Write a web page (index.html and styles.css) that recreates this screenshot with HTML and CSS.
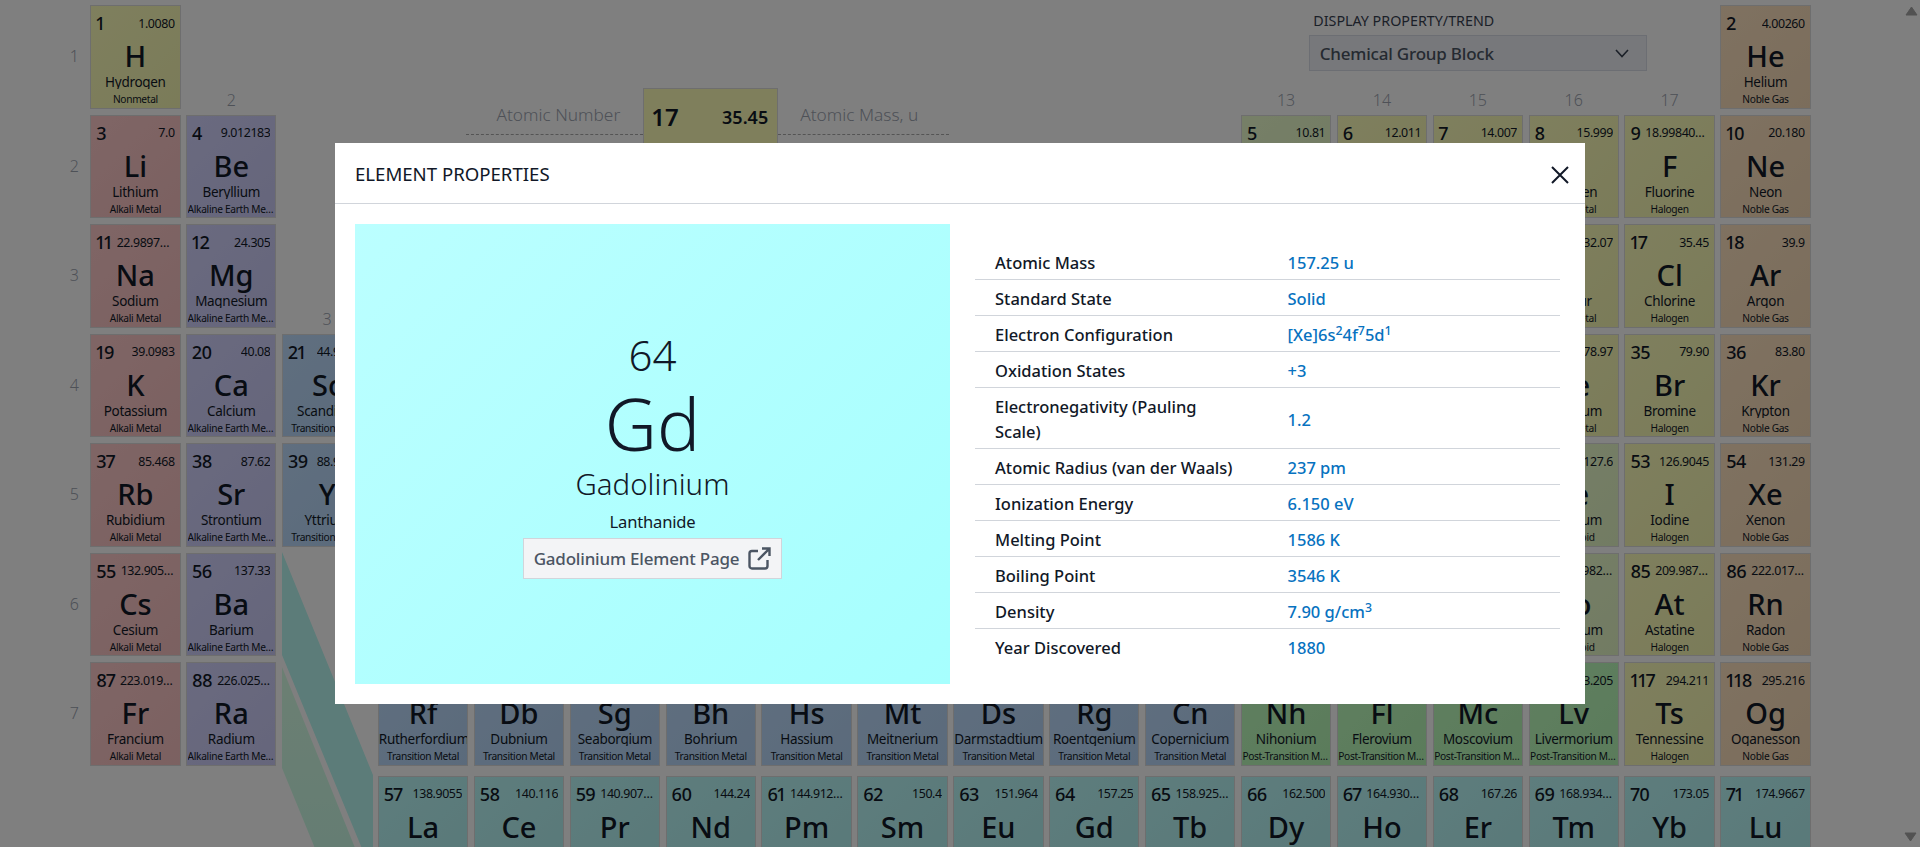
FILE: index.html
```html
<!DOCTYPE html>
<html lang="en">
<head>
  <meta charset="UTF-8">
  <title>Periodic Table of Elements</title>
  <link rel="stylesheet" href="styles.css">
</head>
<body>
  <main id="ptable" class="ptable">
    <!-- legend and property picker sit in the empty top of the table -->
    <div class="legend">
      <div class="legend-side legend-left">Atomic Number</div>
      <div class="legend-cell cat-halogen">
        <div class="legend-top"><span>17</span><span>35.45</span></div>
        <div class="legend-symbol">Cl</div>
        <div class="legend-name">Chlorine</div>
      </div>
      <div class="legend-side legend-right">Atomic Mass, u</div>
    </div>
    <div class="picker">
      <label class="picker-label">DISPLAY PROPERTY/TREND</label>
      <div class="picker-box">
        <span>Chemical Group Block</span>
        <svg class="chevron" viewBox="0 0 14 9" width="14" height="9"><path d="M1 1l6 6.5L13 1" fill="none" stroke="#374151" stroke-width="1.6"/></svg>
      </div>
    </div>
  </main>

  <svg class="connectors" width="1920" height="847" viewBox="0 0 1920 847">
    <defs>
      <linearGradient id="band2" x1="0" y1="0" x2="0" y2="1">
        <stop offset="0" stop-color="#d8ffe6"/>
        <stop offset="1" stop-color="#c8fae6"/>
      </linearGradient>
    </defs>
    <polygon points="282,552 373,775 373,880 375,880 282,655" fill="#b8f8f2"/>
    <polygon points="282,667 368,880 328,880 282,768" fill="url(#band2)"/>
  </svg>

  <div class="overlay">
    <section class="modal">
      <header class="modal-header">
        <h2>ELEMENT PROPERTIES</h2>
        <button class="close" aria-label="Close">
          <svg viewBox="0 0 18 18" width="18" height="18"><path d="M1 1l16 16M17 1L1 17" fill="none" stroke="#111827" stroke-width="2"/></svg>
        </button>
      </header>
      <div class="modal-body">
        <div class="element-card">
          <div class="card-number">64</div>
          <div class="card-symbol">Gd</div>
          <div class="card-name">Gadolinium</div>
          <div class="card-group">Lanthanide</div>
          <a class="card-link" href="#">
            Gadolinium Element Page
            <svg viewBox="0 0 23 23" width="23" height="23"><path d="M10 4H4a2.5 2.5 0 0 0-2.5 2.5V19A2.5 2.5 0 0 0 4 21.5h13a2.5 2.5 0 0 0 2.5-2.5v-6M14 1.5h7.5V9M21.5 1.5L10 13" fill="none" stroke="#4b5563" stroke-width="2.4"/></svg>
          </a>
        </div>
        <div class="props-wrap">
          <table class="props">
            <tr><th>Atomic Mass</th><td>157.25 u</td></tr>
            <tr><th>Standard State</th><td>Solid</td></tr>
            <tr><th>Electron Configuration</th><td>[Xe]6s<sup>2</sup>4f<sup>7</sup>5d<sup>1</sup></td></tr>
            <tr><th>Oxidation States</th><td>+3</td></tr>
            <tr><th>Electronegativity (Pauling Scale)</th><td>1.2</td></tr>
            <tr><th>Atomic Radius (van der Waals)</th><td>237 pm</td></tr>
            <tr><th>Ionization Energy</th><td>6.150 eV</td></tr>
            <tr><th>Melting Point</th><td>1586 K</td></tr>
            <tr><th>Boiling Point</th><td>3546 K</td></tr>
            <tr><th>Density</th><td>7.90 g/cm<sup>3</sup></td></tr>
            <tr><th>Year Discovered</th><td>1880</td></tr>
          </table>
        </div>
      </div>
    </section>

    <svg class="scroll-arrow scroll-up" viewBox="0 0 13 10" width="13" height="10"><path d="M6.5 1L12 9H1z" fill="#525252" stroke="#525252" stroke-linejoin="round"/></svg>
    <svg class="scroll-arrow scroll-down" viewBox="0 0 13 10" width="13" height="10"><path d="M1 1h11L6.5 9z" fill="#525252" stroke="#525252" stroke-linejoin="round"/></svg>
  </div>

  <script src="app.js"></script>
</body>
</html>
```

FILE: styles.css
```css
* { box-sizing: border-box; }
html, body { margin: 0; height: 100%; overflow: hidden; background: #fff; }
body { font-family: "Noto Sans", "Open Sans", sans-serif; color: #111827; }

.ptable {
  display: grid;
  grid-template-columns: 84.7px repeat(18, 90.4px);
  grid-template-rows: repeat(7, 103.5px) 107.5px;
  column-gap: 5.5px;
  row-gap: 6px;
  padding-top: 5px;
}

/* element cell */
.cell {
  display: flex;
  flex-direction: column;
  min-width: 0;
  overflow: hidden;
  border: 1px solid #dcdcdc;
  padding: 5px 5px 0 5px;
  text-align: center;
  background-image: linear-gradient(135deg, rgba(255,255,255,0.06), rgba(0,0,0,0.03));
}
.cell-top { display: flex; justify-content: space-between; align-items: center; gap: 5px; height: 24px; }
.cell-num { font-size: 18px; font-weight: 500; letter-spacing: -0.6px; flex: none; font-variant-numeric: proportional-nums; }
.cell-mass { font-size: 12.4px; letter-spacing: -0.4px; min-width: 0; overflow: hidden; white-space: nowrap; text-overflow: ellipsis; }
.cell-sym { font-size: 29px; font-weight: 500; line-height: 37px; margin-top: 2px; }
.cell-name { font-size: 13.5px; line-height: 16px; height: 15px; overflow: hidden; white-space: nowrap; letter-spacing: -0.3px; margin: 0 -5px; }
.cell-cat { font-size: 10.2px; line-height: 14px; height: 14px; overflow: hidden; white-space: nowrap; text-overflow: ellipsis; letter-spacing: -0.32px; margin: 3px -4.5px 0; }
.row-f { margin-top: 4px; height: 103.5px; }

.cat-alkali { background-color: #ffc8c8; }
.cat-alkaline { background-color: #d2d2ff; }
.cat-transition { background-color: #bcdcff; }
.cat-post { background-color: #bcffbc; }
.cat-metalloid { background-color: #ecffcc; }
.cat-nonmetal { background-color: #feffb8; }
.cat-halogen { background-color: #feffb8; }
.cat-noble { background-color: #ffe2be; }
.cat-lanthanide { background-color: #b8fafa; }

.group-label, .period-label { color: #9ca3af; font-size: 16px; font-weight: 300; line-height: 17px; }
.group-label { align-self: end; text-align: center; }
.period-label { align-self: center; text-align: right; padding-right: 5.7px; grid-column: 1; }

/* legend */
.legend {
  grid-column: 4 / 13;
  grid-row: 1 / 4;
  align-self: start;
  display: flex;
  justify-content: center;
  align-items: flex-start;
  padding-top: 83px;
  padding-right: 6px;
}
.legend-side {
  margin-top: 15px;
  height: 32px;
  line-height: 24px;
  font-size: 17.3px;
  font-weight: 300;
  color: #9ca3af;
  border-bottom: 1px dashed #a8a8a8;
}
.legend-left { width: 177px; text-align: right; padding-right: 23px; }
.legend-right { width: 171px; padding-left: 22px; }
.legend-cell { width: 135px; height: 160px; border: 1px solid #dcdcdc; padding: 14px 9px 0 7px; text-align: center; }
.legend-top { display: flex; justify-content: space-between; font-weight: 600; font-size: 18px; line-height: 28px; }
.legend-top span:first-child { font-size: 24px; }
.legend-symbol { font-size: 44px; font-weight: 500; line-height: 56px; }
.legend-name { font-size: 15px; }

/* property picker */
.picker { grid-column: 14 / 19; grid-row: 1; justify-self: center; width: 338.4px; padding-top: 6px; }
.picker-label { display: block; font-size: 14.3px; line-height: 20px; padding-left: 4.6px; color: #374151; margin-bottom: 4px; }
.picker-box {
  display: flex;
  justify-content: space-between;
  align-items: center;
  height: 36.4px;
  padding: 0 17px 0 10px;
  border: 1px solid #d8dce6;
  background: #eef1f6;
  color: #4b5563;
  font-size: 17px;
  font-weight: 500;
  letter-spacing: -0.2px;
}

.connectors { position: absolute; left: 0; top: 0; pointer-events: none; }

/* modal */
.overlay {
  position: fixed;
  inset: 0;
  background: rgba(0,0,0,0.5);
  display: flex;
  align-items: center;
  justify-content: center;
}
.modal { width: 1250px; height: 561px; background: #fff; display: flex; flex-direction: column; }
.modal-header {
  height: 61px;
  flex: none;
  display: flex;
  align-items: center;
  justify-content: space-between;
  padding: 0 16px 0 20px;
  border-bottom: 1px solid #d1d5db;
}
.modal-header h2 { margin: 0; font-size: 18.6px; font-weight: 400; color: #111827; }
.close { display: flex; border: 0; padding: 0; margin-top: 3px; background: none; }
.modal-body { flex: 1; display: flex; padding: 20px; min-height: 0; }

.element-card {
  width: 595px;
  flex: none;
  display: flex;
  flex-direction: column;
  align-items: center;
  justify-content: center;
  background: linear-gradient(135deg, #bbffff, #a6fffe);
  text-align: center;
}
.card-number { font-size: 42px; font-weight: 300; line-height: 52px; }
.card-symbol { font-size: 72px; font-weight: 300; line-height: 84px; }
.card-name { font-size: 29.4px; font-weight: 300; line-height: 38px; }
.card-group { font-size: 16.6px; line-height: 24px; margin-top: 7px; letter-spacing: -0.2px; }
.card-link {
  display: flex;
  align-items: center;
  gap: 9px;
  height: 41.4px;
  margin-top: 4px;
  padding: 0 10px;
  border: 1px solid #d1d5db;
  background: #f3f4f6;
  color: #4b5563;
  font-size: 17px;
  font-weight: 500;
  text-decoration: none;
  letter-spacing: -0.2px;
}

.props-wrap { flex: 1; display: flex; align-items: center; padding-left: 25px; padding-right: 5px; }
.props { width: 100%; table-layout: fixed; border-collapse: collapse; font-size: 16.5px; line-height: 25px; }
.props tr { border-bottom: 1px solid #d1d5db; }
.props tr:last-child { border-bottom: 0; }
.props th, .props td { padding: 6px 20px 4px; vertical-align: middle; text-align: left; font-weight: 500; }
.props th { color: #111827; padding-right: 28px; }
.props td { color: #0772c0; }
.props sup { font-size: 75%; line-height: 0; vertical-align: baseline; position: relative; top: -0.5em; }

.scroll-arrow { position: absolute; }
.scroll-up { left: 1905px; top: 6px; }
.scroll-down { left: 1904px; top: 832px; }
```

FILE: app.js
```js
// num, symbol, name, mass, category, column, row
const elements = `1 H Hydrogen 1.0080 nonmetal 1 1
2 He Helium 4.00260 noble 18 1
3 Li Lithium 7.0 alkali 1 2
4 Be Beryllium 9.012183 alkaline 2 2
5 B Boron 10.81 metalloid 13 2
6 C Carbon 12.011 nonmetal 14 2
7 N Nitrogen 14.007 nonmetal 15 2
8 O Oxygen 15.999 nonmetal 16 2
9 F Fluorine 18.99840316 halogen 17 2
10 Ne Neon 20.180 noble 18 2
11 Na Sodium 22.9897693 alkali 1 3
12 Mg Magnesium 24.305 alkaline 2 3
13 Al Aluminum 26.981538 post 13 3
14 Si Silicon 28.085 metalloid 14 3
15 P Phosphorus 30.97376200 nonmetal 15 3
16 S Sulfur 32.07 nonmetal 16 3
17 Cl Chlorine 35.45 halogen 17 3
18 Ar Argon 39.9 noble 18 3
19 K Potassium 39.0983 alkali 1 4
20 Ca Calcium 40.08 alkaline 2 4
21 Sc Scandium 44.95591 transition 3 4
22 Ti Titanium 47.867 transition 4 4
23 V Vanadium 50.9415 transition 5 4
24 Cr Chromium 51.996 transition 6 4
25 Mn Manganese 54.93804 transition 7 4
26 Fe Iron 55.84 transition 8 4
27 Co Cobalt 58.93319 transition 9 4
28 Ni Nickel 58.693 transition 10 4
29 Cu Copper 63.55 transition 11 4
30 Zn Zinc 65.4 transition 12 4
31 Ga Gallium 69.723 post 13 4
32 Ge Germanium 72.63 metalloid 14 4
33 As Arsenic 74.92159 metalloid 15 4
34 Se Selenium 78.97 nonmetal 16 4
35 Br Bromine 79.90 halogen 17 4
36 Kr Krypton 83.80 noble 18 4
37 Rb Rubidium 85.468 alkali 1 5
38 Sr Strontium 87.62 alkaline 2 5
39 Y Yttrium 88.90584 transition 3 5
40 Zr Zirconium 91.22 transition 4 5
41 Nb Niobium 92.90637 transition 5 5
42 Mo Molybdenum 95.95 transition 6 5
43 Tc Technetium 96.90636 transition 7 5
44 Ru Ruthenium 101.1 transition 8 5
45 Rh Rhodium 102.9055 transition 9 5
46 Pd Palladium 106.42 transition 10 5
47 Ag Silver 107.868 transition 11 5
48 Cd Cadmium 112.41 transition 12 5
49 In Indium 114.818 post 13 5
50 Sn Tin 118.71 post 14 5
51 Sb Antimony 121.760 metalloid 15 5
52 Te Tellurium 127.6 metalloid 16 5
53 I Iodine 126.9045 halogen 17 5
54 Xe Xenon 131.29 noble 18 5
55 Cs Cesium 132.9054520 alkali 1 6
56 Ba Barium 137.33 alkaline 2 6
72 Hf Hafnium 178.49 transition 4 6
73 Ta Tantalum 180.9479 transition 5 6
74 W Tungsten 183.84 transition 6 6
75 Re Rhenium 186.207 transition 7 6
76 Os Osmium 190.2 transition 8 6
77 Ir Iridium 192.22 transition 9 6
78 Pt Platinum 195.08 transition 10 6
79 Au Gold 196.96657 transition 11 6
80 Hg Mercury 200.59 transition 12 6
81 Tl Thallium 204.383 post 13 6
82 Pb Lead 207 post 14 6
83 Bi Bismuth 208.98040 post 15 6
84 Po Polonium 208.98243 metalloid 16 6
85 At Astatine 209.98715 halogen 17 6
86 Rn Radon 222.01758 noble 18 6
87 Fr Francium 223.01973 alkali 1 7
88 Ra Radium 226.02541 alkaline 2 7
104 Rf Rutherfordium 267.122 transition 4 7
105 Db Dubnium 268.126 transition 5 7
106 Sg Seaborgium 269.128 transition 6 7
107 Bh Bohrium 270.133 transition 7 7
108 Hs Hassium 269.1336 transition 8 7
109 Mt Meitnerium 277.154 transition 9 7
110 Ds Darmstadtium 282.166 transition 10 7
111 Rg Roentgenium 282.169 transition 11 7
112 Cn Copernicium 286.179 transition 12 7
113 Nh Nihonium 286.182 post 13 7
114 Fl Flerovium 290.192 post 14 7
115 Mc Moscovium 290.196 post 15 7
116 Lv Livermorium 293.205 post 16 7
117 Ts Tennessine 294.211 halogen 17 7
118 Og Oganesson 295.216 noble 18 7
57 La Lanthanum 138.9055 lanthanide 4 8
58 Ce Cerium 140.116 lanthanide 5 8
59 Pr Praseodymium 140.90766 lanthanide 6 8
60 Nd Neodymium 144.24 lanthanide 7 8
61 Pm Promethium 144.91276 lanthanide 8 8
62 Sm Samarium 150.4 lanthanide 9 8
63 Eu Europium 151.964 lanthanide 10 8
64 Gd Gadolinium 157.25 lanthanide 11 8
65 Tb Terbium 158.92535 lanthanide 12 8
66 Dy Dysprosium 162.500 lanthanide 13 8
67 Ho Holmium 164.93033 lanthanide 14 8
68 Er Erbium 167.26 lanthanide 15 8
69 Tm Thulium 168.93422 lanthanide 16 8
70 Yb Ytterbium 173.05 lanthanide 17 8
71 Lu Lutetium 174.9667 lanthanide 18 8`;

const catNames = {
  alkali: 'Alkali Metal',
  alkaline: 'Alkaline Earth Metal',
  transition: 'Transition Metal',
  post: 'Post-Transition Metal',
  metalloid: 'Metalloid',
  nonmetal: 'Nonmetal',
  halogen: 'Halogen',
  noble: 'Noble Gas',
  lanthanide: 'Lanthanide'
};

const table = document.getElementById('ptable');

function addLabel(cls, text, col, row) {
  const el = document.createElement('div');
  el.className = cls;
  el.textContent = text;
  el.style.gridColumn = col;
  el.style.gridRow = row;
  table.appendChild(el);
}

for (let r = 1; r <= 7; r++) addLabel('period-label', r, 1, r);
addLabel('group-label', 2, 3, 1);
for (let g = 3; g <= 12; g++) addLabel('group-label', g, g + 1, 3);
for (let g = 13; g <= 17; g++) addLabel('group-label', g, g + 1, 1);

elements.split('\n').forEach(line => {
  const [num, sym, name, mass, cat, col, row] = line.split(' ');
  const cell = document.createElement('div');
  cell.className = 'cell cat-' + cat + (row === '8' ? ' row-f' : '');
  cell.style.gridColumn = Number(col) + 1;
  cell.style.gridRow = row;
  cell.innerHTML = `
    <div class="cell-top"><span class="cell-num">${num}</span><span class="cell-mass">${mass}</span></div>
    <div class="cell-sym">${sym}</div>
    <div class="cell-name">${name}</div>
    <div class="cell-cat">${catNames[cat]}</div>`;
  table.appendChild(cell);
});
```
